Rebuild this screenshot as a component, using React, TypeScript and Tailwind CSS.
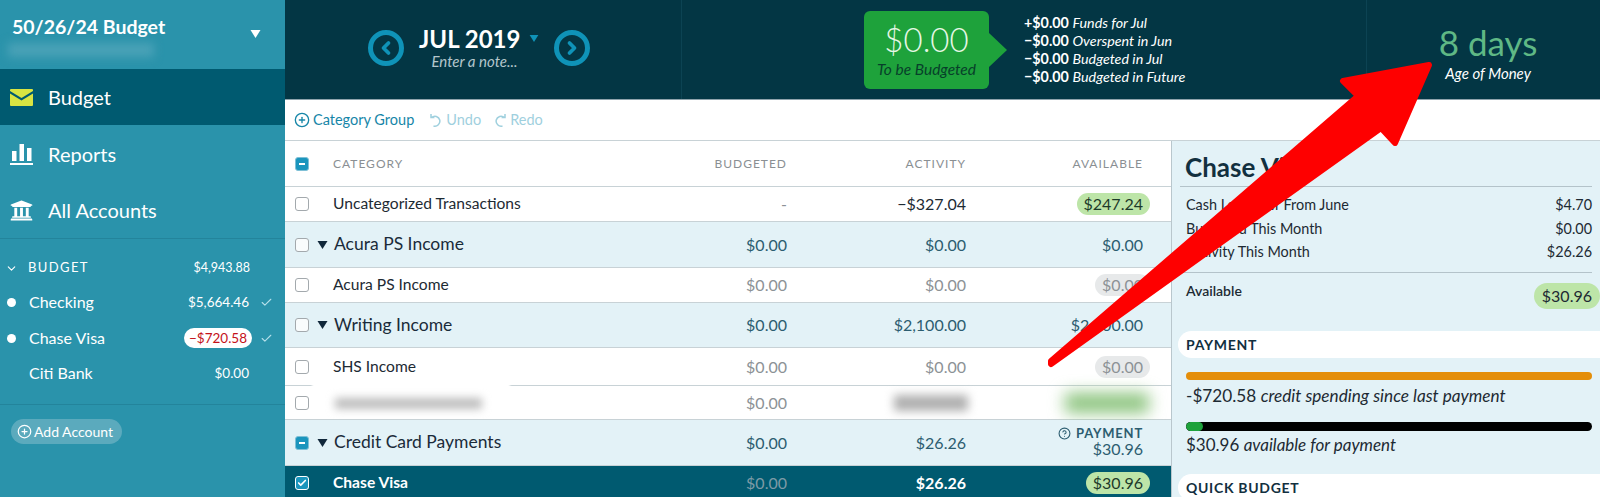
import { Check, ChevronDown, ChevronLeft, ChevronRight, CircleHelp, CirclePlus } from 'lucide-react';
import { FaUniversity } from 'react-icons/fa';

type Kind = 'item' | 'group' | 'selected';

interface RowData {
  kind: Kind;
  name: string;
  height: string;
  budgeted: string;
  activity: string;
  available: string;
  pill?: 'green' | 'gray';
  checked?: 'none' | 'minus' | 'check';
  blurred?: boolean;
  payment?: boolean;
}

const ROWS: RowData[] = [
  { kind: 'item', name: 'Uncategorized Transactions', height: 'h-[35px]', budgeted: '-', activity: '−$327.04', available: '$247.24', pill: 'green' },
  { kind: 'group', name: 'Acura PS Income', height: 'h-[46px]', budgeted: '$0.00', activity: '$0.00', available: '$0.00' },
  { kind: 'item', name: 'Acura PS Income', height: 'h-[35px]', budgeted: '$0.00', activity: '$0.00', available: '$0.00', pill: 'gray' },
  { kind: 'group', name: 'Writing Income', height: 'h-[45px]', budgeted: '$0.00', activity: '$2,100.00', available: '$2,100.00' },
  { kind: 'item', name: 'SHS Income', height: 'h-[38px]', budgeted: '$0.00', activity: '$0.00', available: '$0.00', pill: 'gray' },
  { kind: 'item', name: '', height: 'h-[34px]', budgeted: '$0.00', activity: '', available: '', blurred: true },
  { kind: 'group', name: 'Credit Card Payments', height: 'h-[46px]', budgeted: '$0.00', activity: '$26.26', available: '$30.96', checked: 'minus', payment: true },
  { kind: 'selected', name: 'Chase Visa', height: 'h-[35px]', budgeted: '$0.00', activity: '$26.26', available: '$30.96', pill: 'green', checked: 'check' },
];

function Checkbox({ state = 'none' }: { state?: 'none' | 'minus' | 'check' }) {
  if (state === 'minus') {
    return (
      <span className="flex h-[14px] w-[14px] shrink-0 items-center justify-center rounded-[3px] border border-[#7fc0d6] bg-[#1b95bd]">
        <span className="h-[2px] w-[6px] bg-white" />
      </span>
    );
  }
  if (state === 'check') {
    return (
      <span className="flex h-[14px] w-[14px] shrink-0 items-center justify-center rounded-[3px] border border-white bg-[#1b95bd]">
        <Check className="h-[10px] w-[10px] text-white" strokeWidth={4} />
      </span>
    );
  }
  return <span className="h-[14px] w-[14px] shrink-0 rounded-[3px] border border-[#a3a9ad] bg-white/80" />;
}

function Caret({ className }: { className: string }) {
  return (
    <svg viewBox="0 0 10 8" className={className}>
      <path d="M0 0h10L5 8z" fill="currentColor" />
    </svg>
  );
}

function BudgetRow({ row }: { row: RowData }) {
  const bg =
    row.kind === 'group'
      ? 'bg-[#e3f2f7] text-[#2c5d70]'
      : row.kind === 'selected'
        ? 'bg-[#005a70] text-white'
        : 'bg-white text-[#1d2a33]';
  const budgetedColor =
    row.kind === 'group' ? 'text-[#2c5d70]' : row.kind === 'selected' ? 'text-[#7d9aa6]' : 'text-[#8c9296]';
  const activityColor =
    row.kind === 'group'
      ? 'text-[#2c5d70]'
      : row.kind === 'selected'
        ? 'font-bold text-white'
        : row.activity.startsWith('−')
          ? 'text-[#1d2a33]'
          : 'text-[#8c9296]';

  return (
    <div className={`relative flex shrink-0 items-center border-b border-[#c8d2d6] pl-[10px] pr-[28px] ${row.height} ${bg}`}>
      <Checkbox state={row.checked} />
      {row.kind === 'group' ? (
        <>
          <Caret className="ml-[8px] h-[8px] w-[11px] text-[#10273a]" />
          <span className="ml-[6px] flex-1 text-[17.500px] text-[#1a2b3a]">{row.name}</span>
        </>
      ) : (
        <span className={`ml-[24px] flex-1 text-[15.600px] ${row.kind === 'selected' ? 'font-bold' : ''}`}>{row.name}</span>
      )}
      {row.blurred && (
        <>
          <div className="absolute left-[27px] top-[-3px] h-[5px] w-[198px] bg-white blur-[1px]" />
          <div className="absolute left-[50px] top-[12px] h-[11px] w-[147px] bg-[#bdbdbd] blur-[4px]" />
        </>
      )}
      <span className={`w-[120px] text-right text-[16px] ${budgetedColor}`}>{row.budgeted}</span>
      <span className={`relative w-[179px] text-right text-[16px] ${activityColor}`}>
        {row.activity}
        {row.blurred && (
          <span className="absolute right-[-2px] top-[-8px] h-[16px] w-[74px] bg-[#b0b0b0] blur-[5px]" />
        )}
      </span>
      <div className={`relative flex w-[177px] flex-col items-end text-[16px] ${row.payment ? 'pb-[3px]' : ''}`}>
        {row.payment && (
          <span className="flex items-center gap-[5px] text-[13px] font-bold leading-[16px] tracking-[0.8px] text-[#2c5d70]">
            <CircleHelp className="h-[13px] w-[13px]" />
            PAYMENT
          </span>
        )}
        {row.pill ? (
          <span
            className={`-mr-[7px] rounded-full px-[7px] leading-[22px] ${
              row.pill === 'green' ? 'bg-[#bde5a8] text-[#1d3a2a]' : 'bg-[#e7e9ea] text-[#8c9296]'
            }`}
          >
            {row.available}
          </span>
        ) : (
          <span className={row.payment ? 'leading-[16px]' : ''}>{row.available}</span>
        )}
        {row.blurred && (
          <span className="absolute right-[-6px] top-[-10px] h-[20px] w-[84px] bg-[#8cc47e] blur-sm" />
        )}
      </div>
    </div>
  );
}

function Sidebar() {
  return (
    <aside className="flex h-full w-[285px] shrink-0 flex-col bg-[#2a93ab] text-white">
      <div className="relative h-[69px] shrink-0 pl-[12px] pt-[13px]">
        <div className="text-[19.500px] font-bold leading-[27px]">50/26/24 Budget</div>
        <div className="ml-[-4px] mt-[3px] h-[14px] w-[146px] bg-[#4aa2b7] blur-[5px]" />
        <Caret className="absolute left-[250px] top-[30px] h-[8px] w-[11px] text-white" />
      </div>
      <div className="flex h-[56px] shrink-0 items-center gap-[15px] bg-[#005a70] pl-[10px] text-[20px]">
        <svg viewBox="0 0 23 17" className="h-[17px] w-[23px]">
          <path d="M0 1a1 1 0 0 1 1-1h21a1 1 0 0 1 1 1v1L11.5 9 0 2zM0 4.500l11.500 7 11.500-7V16a1 1 0 0 1-1 1H1a1 1 0 0 1-1-1z" fill="#d9e442" />
        </svg>
        Budget
      </div>
      <div className="flex h-[57px] shrink-0 items-center gap-[15px] pl-[10px] text-[20px]">
        <svg viewBox="0 0 23 23" className="h-[23px] w-[23px]">
          <path d="M2 9h4.500v10H2zM9.500 2H14v17H9.500zM17 6h4.500v13H17zM0 21h23v2H0z" fill="white" />
        </svg>
        Reports
      </div>
      <div className="flex h-[56px] shrink-0 items-center gap-[15px] pl-[10px] text-[20px]">
        <FaUniversity className="h-[23px] w-[23px]" />
        All Accounts
      </div>
      <div className="border-t border-[#23849b] pt-[20px]">
        <div className="flex h-[18px] items-center">
          <ChevronDown className="ml-[5px] h-[13px] w-[13px]" />
          <span className="ml-[10px] flex-1 text-[13px] tracking-[1.400px]">BUDGET</span>
          <span className="mr-[35px] text-[12.500px]">$4,943.88</span>
        </div>
        <AccountRow dot name="Checking" amount="$5,664.46" cleared className="mt-[15px]" />
        <div className="mt-[16px] flex h-[20px] items-center">
          <span className="ml-[7px] h-[9px] w-[9px] rounded-full bg-white" />
          <span className="ml-[13px] flex-1 text-[16px]">Chase Visa</span>
          <span className="rounded-full bg-white px-[5px] text-[13.500px] leading-[20px] text-[#c4121a]">−$720.58</span>
          <Check className="ml-[8px] mr-[12px] h-[13px] w-[13px] text-[#b5e0ea]" />
        </div>
        <AccountRow name="Citi Bank" amount="$0.00" className="mt-[15px]" />
      </div>
      <div className="mt-[21px] border-t border-[#23849b] pl-[11px] pt-[14px]">
        <span className="inline-flex h-[25px] items-center gap-[2px] rounded-full bg-[#5baabd] pl-[6px] pr-[9px] text-[14px]">
          <CirclePlus className="h-[15px] w-[15px]" />
          Add Account
        </span>
      </div>
    </aside>
  );
}

function AccountRow({ name, amount, dot, cleared, className }: { name: string; amount: string; dot?: boolean; cleared?: boolean; className: string }) {
  return (
    <div className={`flex h-[20px] items-center ${className}`}>
      {dot ? <span className="ml-[7px] h-[9px] w-[9px] rounded-full bg-white" /> : <span className="ml-[7px] w-[9px]" />}
      <span className="ml-[13px] flex-1 text-[16px]">{name}</span>
      <span className="text-[13.500px]">{amount}</span>
      <span className="ml-[11px] mr-[12px] w-[13px]">{cleared && <Check className="h-[13px] w-[13px] text-[#b5e0ea]" />}</span>
    </div>
  );
}

function MonthCircle({ next }: { next?: boolean }) {
  const Icon = next ? ChevronRight : ChevronLeft;
  return (
    <span className="flex h-[36px] w-[36px] items-center justify-center rounded-full border-[5px] border-[#0f93b8]">
      <Icon className="h-[20px] w-[20px] text-[#0f93b8]" strokeWidth={4.500} />
    </span>
  );
}

function Header() {
  return (
    <header className="flex h-[100px] shrink-0 border-b border-[#8fa3ac] bg-[#033644] text-white">
      <div className="flex w-[397px] shrink-0 items-center border-r border-[#0c4353] pb-[3px] pl-[83px]">
        <MonthCircle />
        <div className="ml-[15px] w-[101px] text-center">
          <div className="text-[24px] font-bold leading-[26px] whitespace-nowrap">JUL 2019</div>
          <div className="pl-[10px] text-[15px] italic leading-[18px] text-[#b4c6cc] whitespace-nowrap">Enter a note...</div>
        </div>
        <Caret className="ml-[9px] mb-[20px] h-[7px] w-[10px] text-[#0f93b8]" />
        <span className="ml-[15px]">
          <MonthCircle next />
        </span>
      </div>
      <div className="flex w-[685px] shrink-0 items-center border-r border-[#0c4353] pl-[182px]">
        <div className="relative flex h-[78px] w-[125px] flex-col items-center rounded-[6px] bg-[#1ea23b]">
          <span className="mt-[7px] text-[33px] font-light leading-[42px] text-[#e6f7e6]">$0.00</span>
          <span className="text-[15.500px] italic leading-[18px] text-[#073f2a]">To be Budgeted</span>
          <span className="absolute left-full top-[22px] h-0 w-0 border-y-[17px] border-l-[18px] border-y-transparent border-l-[#1ea23b]" />
        </div>
        <div className="ml-[35px] text-[14.300px] leading-[18px] whitespace-nowrap">
          <div><b>+$0.00</b> <i>Funds for Jul</i></div>
          <div><b>−$0.00</b> <i>Overspent in Jun</i></div>
          <div><b>−$0.00</b> <i>Budgeted in Jul</i></div>
          <div><b>−$0.00</b> <i>Budgeted in Future</i></div>
        </div>
      </div>
      <div className="flex flex-1 flex-col items-center pl-[9px] pt-[20px]">
        <span className="text-[35px] leading-[44px] text-[#5fb885]">8 days</span>
        <span className="text-[15px] italic leading-[18px]">Age of Money</span>
      </div>
    </header>
  );
}

function Toolbar() {
  return (
    <div className="flex h-[41px] shrink-0 items-center border-b border-[#c8d2d6] bg-white pl-[9px] text-[14.500px]">
      <span className="flex items-center gap-[3px] text-[#1686a8]">
        <CirclePlus className="h-[16px] w-[16px]" />
        Category Group
      </span>
      <span className="ml-[15px] flex items-center gap-[3px] text-[#9fd0de]">
        <svg viewBox="0 0 14 14" className="h-[14px] w-[14px]" fill="none" stroke="currentColor" strokeWidth="1.500">
          <path d="M2 1v3.500h3.500M2.500 4.500a5 5 0 1 1 2 8.500" />
        </svg>
        Undo
      </span>
      <span className="ml-[12px] flex items-center gap-[3px] text-[#9fd0de]">
        <svg viewBox="0 0 14 14" className="h-[14px] w-[14px]" fill="none" stroke="currentColor" strokeWidth="1.500">
          <path d="M12 1v3.500H8.500M11.500 4.500a5 5 0 1 0-2 8.500" />
        </svg>
        Redo
      </span>
    </div>
  );
}

function BudgetTable() {
  return (
    <div className="w-[887px] shrink-0 border-r border-[#b9c7cd]">
      <div className="flex h-[46px] items-center border-b border-[#c8d2d6] bg-white pl-[10px] pr-[28px] text-[12px] tracking-[1px] text-[#8a8f93]">
        <Checkbox state="minus" />
        <span className="ml-[24px] flex-1">CATEGORY</span>
        <span className="w-[120px] text-right">BUDGETED</span>
        <span className="w-[179px] text-right">ACTIVITY</span>
        <span className="w-[177px] text-right">AVAILABLE</span>
      </div>
      {ROWS.map((row, i) => (
        <BudgetRow key={i} row={row} />
      ))}
    </div>
  );
}

function Inspector() {
  return (
    <div className="min-w-0 flex-1 bg-[#e3f2f7] pt-[7px] text-[#1d2a33]">
      <div className="mx-[8px] flex h-[39px] items-center border-b border-[#b4c3ca] pl-[5px] text-[26px] font-bold leading-[32px] text-[#12303f]">
        Chase Visa
      </div>
      <div className="mx-[8px] border-b border-[#b4c3ca] pb-[8px] pl-[6px] pt-[6px] text-[14.400px] leading-[23.500px]">
        <div className="flex justify-between"><span>Cash Left Over From June</span><span>$4.70</span></div>
        <div className="flex justify-between"><span>Budgeted This Month</span><span>$0.00</span></div>
        <div className="flex justify-between"><span>Activity This Month</span><span>$26.26</span></div>
      </div>
      <div className="ml-[14px] mt-[10px] flex items-start justify-between">
        <span className="-mt-[2px] text-[14px] font-semibold leading-[20px]">Available</span>
        <span className="rounded-full bg-[#bde5a8] px-[8px] text-[16px] leading-[26px]">$30.96</span>
      </div>
      <div className="ml-[6px] mt-[22px] flex h-[27px] items-center rounded-l-full bg-white pl-[8px] text-[14px] font-bold tracking-[0.7px] text-[#12303f]">
        PAYMENT
      </div>
      <div className="ml-[14px] mr-[8px] mt-[14px]">
        <div className="h-[8px] rounded-full bg-[#e48e0a]" />
        <div className="mt-[5px] text-[17.200px] leading-[22px]">
          -$720.58 <i>credit spending since last payment</i>
        </div>
        <div className="mt-[15px] h-[9px] overflow-hidden rounded-full bg-black">
          <div className="h-full w-[17px] rounded-full bg-[#1ea23b]" />
        </div>
        <div className="mt-[3px] text-[17px] leading-[22px]">
          $30.96 <i>available for payment</i>
        </div>
      </div>
      <div className="ml-[6px] mt-[18px] flex h-[27px] items-center rounded-l-full bg-white pl-[8px] text-[14px] font-bold tracking-[0.7px] text-[#12303f]">
        QUICK BUDGET
      </div>
    </div>
  );
}

export default function App() {
  return (
    <div className="relative flex h-[497px] w-[1600px] overflow-hidden bg-white font-[Lato,'Liberation_Sans',sans-serif]">
      <Sidebar />
      <main className="flex min-w-0 flex-1 flex-col">
        <Header />
        <Toolbar />
        <div className="flex min-h-0 flex-1">
          <BudgetTable />
          <Inspector />
        </div>
      </main>
      {/* annotation arrow drawn over the screenshot */}
      <svg viewBox="0 0 1600 497" className="pointer-events-none absolute inset-0 h-[497px] w-[1600px]">
        <polygon
          points="1429,65 1395,143 1381,128 1051,364 1051,361 1358,96 1343,81"
          fill="#fe0000"
          stroke="#fe0000"
          strokeWidth="6"
          strokeLinejoin="round"
        />
      </svg>
    </div>
  );
}
